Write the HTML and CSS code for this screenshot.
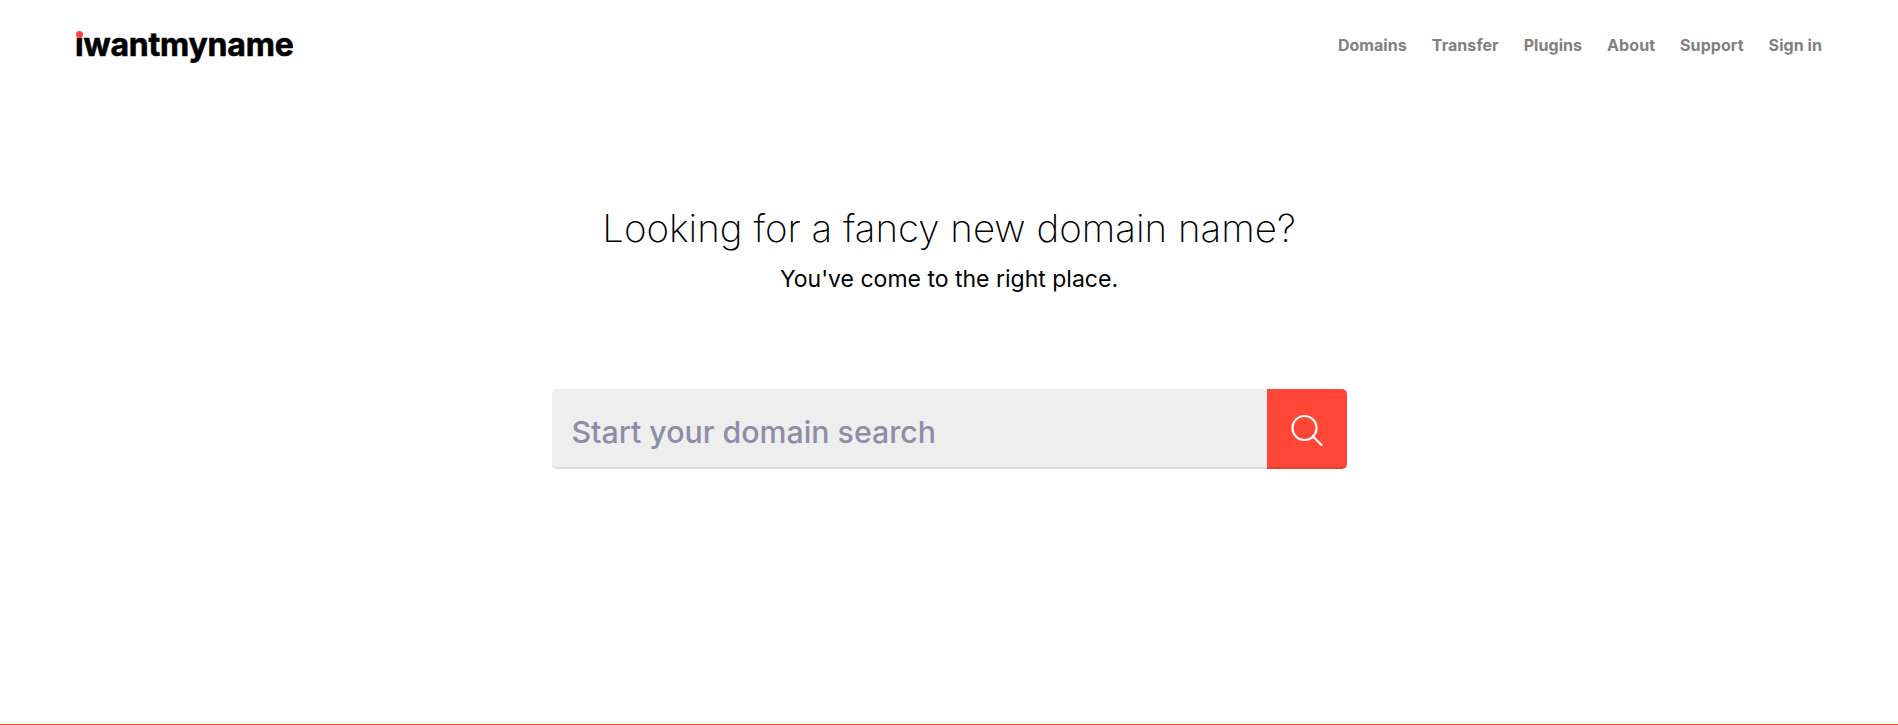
FILE: index.html
```html
<!DOCTYPE html>
<html lang="en">
<head>
<meta charset="UTF-8">
<meta name="viewport" content="width=device-width, initial-scale=1.0">
<title>iwantmyname</title>
<link rel="stylesheet" href="styles.css">
</head>
<body>
    <header class="site-header">
        <a class="logo" href="#"><span class="logo-i">ı<span class="logo-dot"></span></span>wantmyname</a>
        <nav class="site-nav">
            <a href="#">Domains</a>
            <a href="#">Transfer</a>
            <a href="#">Plugins</a>
            <a href="#">About</a>
            <a href="#">Support</a>
            <a href="#">Sign in</a>
        </nav>
    </header>

    <main class="hero">
        <h1>Looking for a fancy new domain name?</h1>
        <p class="tagline">You've come to the right place.</p>

        <form class="search">
            <input class="search-input" type="text" placeholder="Start your domain search">
            <button class="search-button" type="button" aria-label="Search">
                <svg width="32" height="36" viewBox="0 0 32 36" fill="none" stroke="#fff" stroke-width="2.2" stroke-linecap="round">
                    <circle cx="13.5" cy="18" r="12"></circle>
                    <path d="M22 26.5 L30.5 35"></path>
                </svg>
            </button>
        </form>
    </main>
</body>
</html>
```

FILE: styles.css
```css
html, body {
    height: 100%;
}

body {
    font-family: Inter, "Liberation Sans", Arial, sans-serif;
    margin: 0;
    background-color: #fff;
    color: #000;
    border-bottom: 1px solid #ff4737;
    box-sizing: border-box;
    overflow: hidden;
}

a {
    text-decoration: none;
}

.site-header {
    display: flex;
    justify-content: space-between;
    align-items: center;
    height: 89px;
    padding: 0 76px 0 75px;
}

.logo {
    font-size: 32px;
    font-weight: 700;
    letter-spacing: -0.2px;
    line-height: 40px;
    color: #000;
    -webkit-text-stroke: 0.6px #000;
}

.logo-i {
    position: relative;
}

.logo-dot {
    position: absolute;
    left: 1px;
    top: 6px;
    width: 7px;
    height: 7px;
    border-radius: 50%;
    background-color: #ff4737;
}

.site-nav {
    display: flex;
    gap: 25px;
}

.site-nav a {
    font-size: 16px;
    font-weight: 700;
    letter-spacing: 0.06px;
    color: #808080;
}

.hero {
    display: flex;
    flex-direction: column;
    align-items: center;
    padding-top: 114px;
}

h1 {
    font-size: 38.5px;
    font-weight: 200;
    line-height: 50px;
    margin: 0;
}

.tagline {
    font-size: 23px;
    line-height: 30px;
    margin: 11px 0 0;
}

.search {
    display: flex;
    width: 795px;
    height: 80px;
    margin-top: 95px;
}

.search-input {
    flex: 1;
    min-width: 0;
    font-family: Inter, "Liberation Sans", sans-serif;
    font-size: 30.3px;
    font-weight: 500;
    color: #333;
    padding: 8px 20px 0;
    border: none;
    border-bottom: 2px solid #dcdcdc;
    border-radius: 5px 0 0 5px;
    background-color: #eee;
    outline: none;
}

.search-input::placeholder {
    color: #8f8ca8;
    opacity: 1;
}

.search-button {
    display: flex;
    justify-content: center;
    align-items: center;
    width: 80px;
    padding: 0;
    border: none;
    border-bottom: 2px solid #e5402f;
    border-radius: 0 5px 5px 0;
    background-color: #ff4737;
    cursor: pointer;
}
```
